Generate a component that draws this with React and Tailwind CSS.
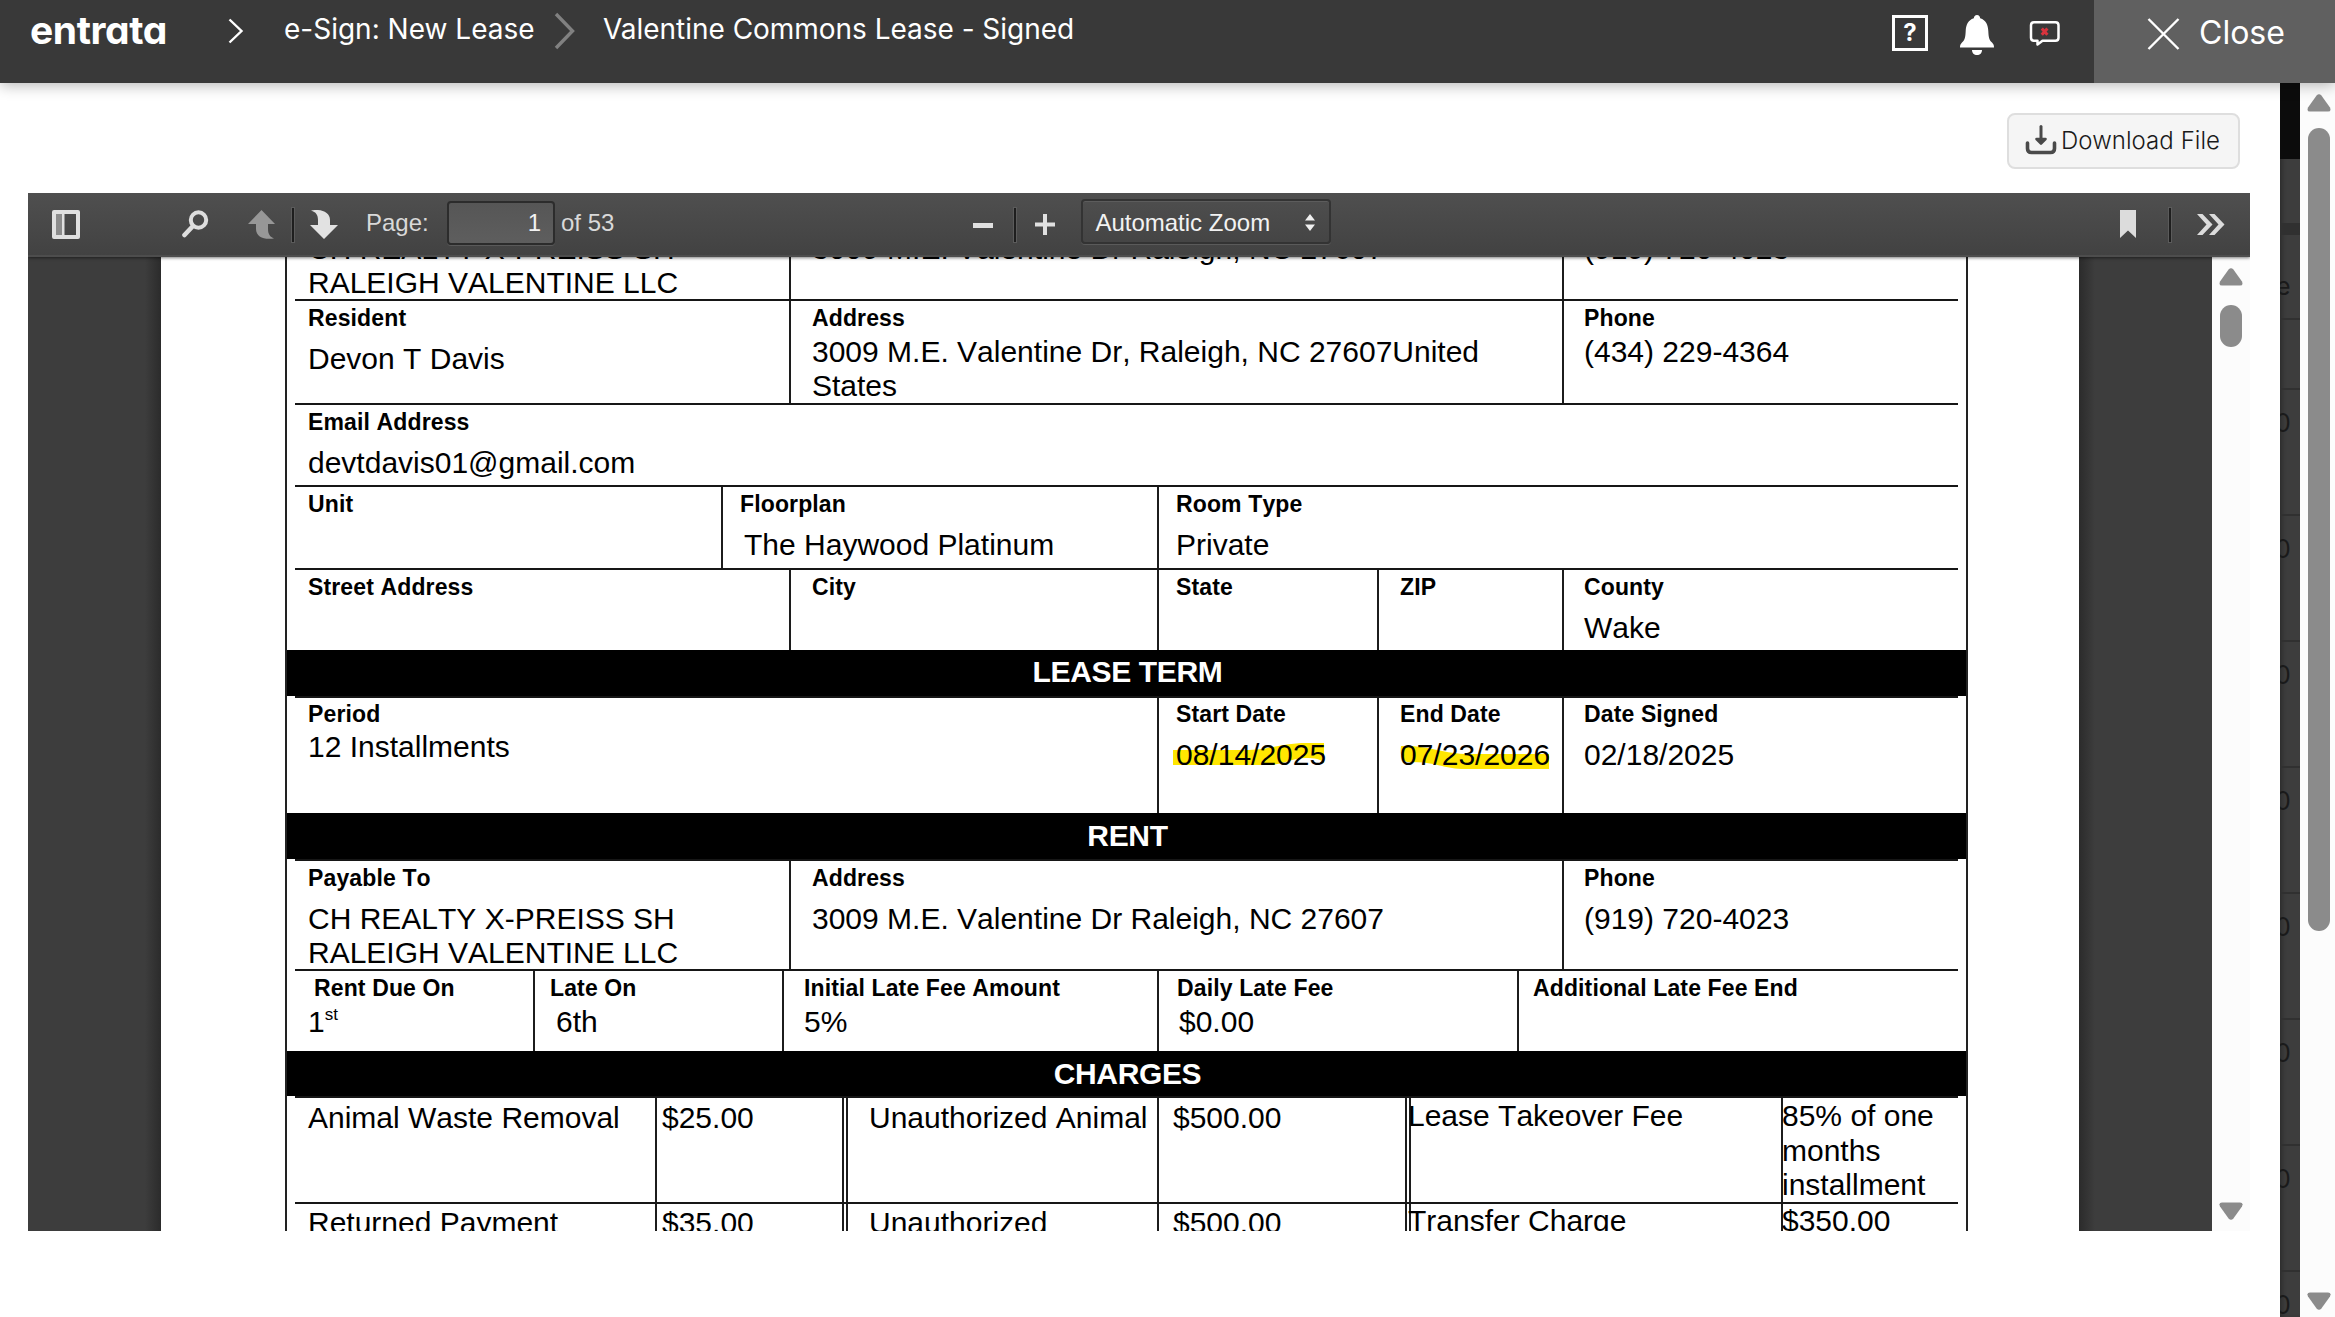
import React from "react";

/* ---------- document primitives ---------- */

function Row({ h, line = true, children }) {
  return (
    <div className={`mx-[8px] flex overflow-hidden ${line ? "border-t-2 border-[#161616]" : ""} ${h}`}>
      {children}
    </div>
  );
}

function Cell({ first, className = "", children }) {
  return (
    <div className={`relative shrink-0 whitespace-nowrap ${first ? "" : "border-l-2 border-[#1c1c1c]"} ${className}`}>
      {children}
    </div>
  );
}

function Label({ className = "mt-[2px]", children }) {
  return <div className={`text-[23px] font-bold leading-[30px] tracking-[0.13px] ${className}`}>{children}</div>;
}

function Value({ className = "mt-[9px]", children }) {
  return <div className={`text-[30px] ${className}`}>{children}</div>;
}

function Banner({ h, className = "", children }) {
  return (
    <div className={`bg-black pl-[2px] text-center text-[30px] font-bold leading-[34px] tracking-[-0.35px] text-white ${h} ${className}`}>
      {children}
    </div>
  );
}

function LeaseTable() {
  return (
    <div className="ml-[124px] h-[974px] w-[1683px] overflow-hidden border-x-2 border-[#222] leading-[34px] text-black [font-kerning:none]">
      <Row h="h-[42px]" line={false}>
        <Cell first className="w-[494px] pl-[13px]">
          <Value className="mt-[-25px]">CH REALTY X-PREISS SH</Value>
          <Value className="mt-0">RALEIGH VALENTINE LLC</Value>
        </Cell>
        <Cell className="w-[773px] pl-[21px]">
          <Value className="mt-[-25px]">3009 M.E. Valentine Dr Raleigh, NC 27607</Value>
        </Cell>
        <Cell className="grow pl-[20px]">
          <Value className="mt-[-25px]">(919) 720-4023</Value>
        </Cell>
      </Row>

      <Row h="h-[104px]">
        <Cell first className="w-[494px] pl-[13px]">
          <Label>Resident</Label>
          <Value>Devon T Davis</Value>
        </Cell>
        <Cell className="w-[773px] pl-[21px]">
          <Label>Address</Label>
          <Value className="mt-[2px]">
            3009 M.E. Valentine Dr, Raleigh, NC 27607United
            <br />
            States
          </Value>
        </Cell>
        <Cell className="grow pl-[20px]">
          <Label>Phone</Label>
          <Value className="mt-[2px]">(434) 229-4364</Value>
        </Cell>
      </Row>

      <Row h="h-[82px]">
        <Cell first className="grow pl-[13px]">
          <Label>Email Address</Label>
          <Value>devtdavis01@gmail.com</Value>
        </Cell>
      </Row>

      <Row h="h-[83px]">
        <Cell first className="w-[426px] pl-[13px]">
          <Label>Unit</Label>
        </Cell>
        <Cell className="w-[436px] pl-[17px]">
          <Label>Floorplan</Label>
          <Value className="mt-[9px] pl-1">The Haywood Platinum</Value>
        </Cell>
        <Cell className="grow pl-[17px]">
          <Label>Room Type</Label>
          <Value>Private</Value>
        </Cell>
      </Row>

      <Row h="h-[82px]">
        <Cell first className="w-[494px] pl-[13px]">
          <Label>Street Address</Label>
        </Cell>
        <Cell className="w-[368px] pl-[21px]">
          <Label>City</Label>
        </Cell>
        <Cell className="w-[220px] pl-[17px]">
          <Label>State</Label>
        </Cell>
        <Cell className="w-[185px] pl-[21px]">
          <Label>ZIP</Label>
        </Cell>
        <Cell className="grow pl-[20px]">
          <Label>County</Label>
          <Value>Wake</Value>
        </Cell>
      </Row>

      <Banner h="h-[46px]" className="pt-[5px]">LEASE TERM</Banner>

      <Row h="h-[117px]">
        <Cell first className="w-[862px] pl-[13px]">
          <Label className="mt-px">Period</Label>
          <Value className="mt-px">12 Installments</Value>
        </Cell>
        <Cell className="w-[220px] pl-[17px]">
          <svg className="absolute left-[14px] top-[44px]" width="152" height="26" viewBox="0 0 152 26" fill="#ffe600">
            <path d="M0 8H72C98 8 108 1 134 1H151V21C148 17 142 16 132 16C118 16 112 23 92 23H0Z" />
          </svg>
          <Label className="mt-px">Start Date</Label>
          <Value className="relative mt-[9px]">08/14/2025</Value>
        </Cell>
        <Cell className="w-[185px] pl-[21px]">
          <svg className="absolute left-[20px] top-[44px]" width="152" height="28" viewBox="0 0 152 28" fill="#ffe600">
            <path d="M2 4C30 3 44 12 70 12H150V27H66C44 27 36 19 8 20C2 18 1 12 2 4Z" />
          </svg>
          <Label className="mt-px">End Date</Label>
          <Value className="relative mt-[9px]">07/23/2026</Value>
        </Cell>
        <Cell className="grow pl-[20px]">
          <Label className="mt-px">Date Signed</Label>
          <Value>02/18/2025</Value>
        </Cell>
      </Row>

      <Banner h="h-[46px]" className="pt-[6px]">RENT</Banner>

      <Row h="h-[110px]">
        <Cell first className="w-[494px] pl-[13px]">
          <Label>Payable To</Label>
          <Value>
            CH REALTY X-PREISS SH
            <br />
            RALEIGH VALENTINE LLC
          </Value>
        </Cell>
        <Cell className="w-[773px] pl-[21px]">
          <Label>Address</Label>
          <Value>3009 M.E. Valentine Dr Raleigh, NC 27607</Value>
        </Cell>
        <Cell className="grow pl-[20px]">
          <Label>Phone</Label>
          <Value>(919) 720-4023</Value>
        </Cell>
      </Row>

      <Row h="h-[82px]">
        <Cell first className="w-[238px] pl-[13px]">
          <Label className="mt-[2px] pl-[6px]">Rent Due On</Label>
          <Value className="mt-[2px]">
            1<span className="relative top-[-12px] text-[17px] leading-none">st</span>
          </Value>
        </Cell>
        <Cell className="w-[249px] pl-[15px]">
          <Label>Late On</Label>
          <Value className="mt-[2px] pl-[6px]">6th</Value>
        </Cell>
        <Cell className="w-[375px] pl-[20px]">
          <Label>Initial Late Fee Amount</Label>
          <Value className="mt-[2px]">5%</Value>
        </Cell>
        <Cell className="w-[360px] pl-[18px]">
          <Label>Daily Late Fee</Label>
          <Value className="mt-[2px] pl-[2px]">$0.00</Value>
        </Cell>
        <Cell className="grow pl-[14px]">
          <Label>Additional Late Fee End</Label>
        </Cell>
      </Row>

      <Banner h="h-[45px]" className="pt-[6px]">CHARGES</Banner>

      <Row h="h-[106px]">
        <Cell first className="w-[360px] pl-[13px]">
          <Value className="mt-[3px]">Animal Waste Removal</Value>
        </Cell>
        <Cell className="w-[187px] pl-[5px]">
          <Value className="mt-[3px]">$25.00</Value>
        </Cell>
        <Cell className="w-1" />
        <Cell className="w-[311px] pl-[21px]">
          <Value className="mt-[3px]">Unauthorized Animal</Value>
        </Cell>
        <Cell className="w-[248px] pl-[14px]">
          <Value className="mt-[3px]">$500.00</Value>
        </Cell>
        <Cell className="w-1" />
        <Cell className="w-[372px]">
          <Value className="ml-[-3px] mt-px">Lease Takeover Fee</Value>
        </Cell>
        <Cell className="grow">
          <Value className="ml-[-1px] mt-px leading-[34.5px]">
            85% of one
            <br />
            months
            <br />
            installment
          </Value>
        </Cell>
      </Row>

      <Row h="h-[29px]">
        <Cell first className="w-[360px] pl-[13px]">
          <Value className="mt-[2px]">Returned Payment</Value>
        </Cell>
        <Cell className="w-[187px] pl-[5px]">
          <Value className="mt-[2px]">$35.00</Value>
        </Cell>
        <Cell className="w-1" />
        <Cell className="w-[311px] pl-[21px]">
          <Value className="mt-[2px]">Unauthorized</Value>
        </Cell>
        <Cell className="w-[248px] pl-[14px]">
          <Value className="mt-[2px]">$500.00</Value>
        </Cell>
        <Cell className="w-1" />
        <Cell className="w-[372px]">
          <Value className="ml-[-3px] mt-0">Transfer Charge</Value>
        </Cell>
        <Cell className="grow">
          <Value className="ml-[-1px] mt-0">$350.00</Value>
        </Cell>
      </Row>
    </div>
  );
}

/* ---------- chrome ---------- */

function ScrollArrow({ down }) {
  return (
    <svg width="24" height="18" viewBox="0 0 24 18" className={down ? "rotate-180" : ""} fill="#8b8b8b">
      <path d="M9.6 1.6Q12-1.2 14.4 1.6L23 13.6Q24.6 17.6 21 17.6H3Q-.6 17.6 1 13.6Z" />
    </svg>
  );
}

function Separator({ className }) {
  return <div className={`h-9 w-[4px] border border-[#5b5b5b] bg-[#1e1e1e] ${className}`} />;
}

function Header() {
  return (
    <header className="relative z-10 flex h-[83px] w-full bg-[#393939] font-[Inter,sans-serif] text-white shadow-[0_2px_14px_rgba(0,0,0,0.3)]">
      <div className="ml-[30px] w-[140px] pt-[6px] text-[39px] font-bold leading-[48px] tracking-[-0.4px] [font-feature-settings:'cv11'_1]">
        entrata
      </div>
      <svg className="ml-[57px] mt-[18px]" width="18" height="26" viewBox="0 0 18 26" fill="none" stroke="#fff" strokeWidth="2.4">
        <path d="M2.5 1.5L14.5 13L2.5 24.5" />
      </svg>
      <div className="ml-[39px] w-[250px] whitespace-nowrap pt-[11px] text-[28px] leading-9">e-Sign: New Lease</div>
      <svg className="ml-[19px] mt-[12px]" width="24" height="38" viewBox="0 0 24 38" fill="none" stroke="#818181" strokeWidth="3.4">
        <path d="M3 2L19.5 19L3 36" />
      </svg>
      <div className="ml-[26px] w-[480px] whitespace-nowrap pt-[11px] text-[28px] leading-9 tracking-[-0.03px]">
        Valentine Commons Lease - Signed
      </div>
      <div className="ml-auto flex">
        <div className="mt-[15px] flex h-9 w-9 items-center justify-center border-[3px] border-white text-[24px] font-bold leading-none">
          ?
        </div>
        <svg className="ml-8 mt-[15px]" width="34" height="40" viewBox="0 0 34 40" fill="#fff">
          <path d="M17 0C19 0 20 1.4 20.2 3.2C26 5 28 10 28.3 16C28.6 22 29 25 32 27.5C33.6 29 34 30.500 34 32.500H0C0 30.500.4 29 2 27.500C5 25 5.400 22 5.700 16C6 10 8 5 13.800 3.200C14 1.400 15 0 17 0Z" />
          <path d="M12 35H22C22 38 20 40 17 40S12 38 12 35Z" />
        </svg>
        <svg className="ml-[35px] mt-[20px]" width="32" height="28" viewBox="0 0 32 28" fill="none">
          <path d="M5 2.300H26.500Q29.500 2.300 29.500 5.300V17.700Q29.500 20.700 26.500 20.700H13.500L8.500 24.500V20.700H5Q2 20.700 2 17.700V5.300Q2 2.300 5 2.300Z" stroke="#fff" strokeWidth="2.500" strokeLinejoin="round" />
          <path d="M12.800 8.500L18.400 14.800M18.400 8.500L12.800 14.800" stroke="#d8333d" strokeWidth="3" />
        </svg>
        <div className="ml-[33px] flex h-[83px] w-[241px] bg-[#606060]">
          <svg className="ml-[53px] mt-[18px]" width="33" height="32" viewBox="0 0 33 32" fill="none" stroke="#fff" strokeWidth="2.400">
            <path d="M1.500 1L31.500 31M31.500 1L1.500 31" />
          </svg>
          <div className="ml-[19px] pt-[12px] text-[32px] leading-[42px]">Close</div>
        </div>
      </div>
    </header>
  );
}

function Toolbar() {
  return (
    <div className="relative z-10 flex h-16 w-full items-start border-b-2 border-[#4d4d4d] bg-linear-to-b from-[#4f4f4f] to-[#424242] text-[24px] leading-[30px] text-[#d9d9d9] shadow-[0_1px_3px_rgba(0,0,0,0.5)]">
      <svg className="ml-[24px] mt-[17px]" width="28" height="29" viewBox="0 0 28 29">
        <path fillRule="evenodd" fill="#e0e0e0" d="M2 0H26Q28 0 28 2V27Q28 29 26 29H2Q0 29 0 27V2Q0 0 2 0ZM4 4V25H24V4Z" />
        <rect x="4" y="4" width="6" height="21" fill="#8c8c8c" />
        <rect x="10" y="4" width="2.500" height="21" fill="#e0e0e0" />
      </svg>
      <svg className="ml-[102px] mt-[17px]" width="27" height="28" viewBox="0 0 27 28" fill="none" stroke="#dedede">
        <circle cx="16.500" cy="10" r="7.700" strokeWidth="4" />
        <path d="M10.500 16.500L2.500 25" strokeWidth="4.600" strokeLinecap="round" />
      </svg>
      <svg className="ml-[39px] mt-[17px]" width="28" height="29" viewBox="0 0 28 29" fill="#979797">
        <path d="M13.500 0L27 14H20V19C20 24 22 27 26 28.500C16 30 8 27 8 19V14H0Z" />
      </svg>
      <Separator className="ml-[15px] mt-[14px]" />
      <svg className="ml-[15px] mt-[17px]" width="28" height="29" viewBox="0 0 28 29" fill="#e2e2e2">
        <path d="M1 .5C11-1.500 20 2 20 10V15H28L14 29L0 15H8V10C8 5 6 2 1 .5Z" />
      </svg>
      <div className="ml-[28px] mt-[15px] w-[81px]">Page:</div>
      <div className="mt-2 h-11 w-[108px] rounded-[4px] border-2 border-[#2c2c2c] bg-linear-to-b from-[#565656] to-[#5e5e5e] pr-[12px] pt-[5px] text-right text-[#f2f2f2] shadow-[0_1px_0_#5a5a5a]">
        1
      </div>
      <div className="ml-[6px] mt-[15px]">of 53</div>
      <div className="ml-[359px] mt-[30px] h-[5px] w-5 bg-[#e0e0e0]" />
      <Separator className="ml-[20px] mt-[14px]" />
      <svg className="ml-[18px] mt-[21px]" width="20" height="21" viewBox="0 0 20 21" fill="#e0e0e0">
        <path d="M8 0H12V8.500H20V12.500H12V21H8V12.500H0V8.500H8Z" />
      </svg>
      <div className="ml-[26px] mt-[6px] flex h-[45px] w-[250px] rounded-[4px] border-2 border-[#333] pl-[12px] pt-[7px] text-[#f2f2f2] shadow-[0_1px_0_#5a5a5a,inset_0_1px_0_#5c5c5c]">
        <span className="w-[210px] whitespace-nowrap">Automatic Zoom</span>
        <svg className="mt-[6px]" width="10" height="17" viewBox="0 0 10 17" fill="#f0f0f0">
          <path d="M5 0L10 6.500H0ZM5 17L10 10.500H0Z" />
        </svg>
      </div>
      <div className="ml-auto flex">
        <svg className="mt-[17px]" width="16" height="28" viewBox="0 0 16 28" fill="#dcdcdc">
          <path d="M0 0H16V28L8 20.500L0 28Z" />
        </svg>
        <Separator className="ml-[32px] mt-[14px]" />
        <svg className="ml-[25px] mr-[25px] mt-[21px]" width="28" height="21" viewBox="0 0 28 21" fill="#dcdcdc">
          <path d="M0 0H5.500L15.500 10.500L5.500 21H0L9.500 10.500ZM12 0H17.500L27.500 10.500L17.500 21H12L21.500 10.500Z" />
        </svg>
      </div>
    </div>
  );
}

function Viewer() {
  return (
    <div className="ml-[28px] h-[1038px] w-[2222px] overflow-hidden font-['Liberation_Sans',Arial,sans-serif]">
      <Toolbar />
      <div className="flex h-[974px] w-full bg-[#3d3d3d]">
        <div className="h-full w-[133px] bg-linear-to-r from-[#3d3d3d] from-88% to-[#2b2b2b]" />
        <div className="h-full w-[1918px] bg-white">
          <LeaseTable />
        </div>
        <div className="h-full w-[133px] bg-linear-to-l from-[#3d3d3d] from-88% to-[#2b2b2b]" />
        <div className="flex w-[38px] flex-col items-center bg-[#fcfcfc] pt-[11px]">
          <ScrollArrow />
          <div className="mt-[19px] h-[42px] w-[22px] rounded-full bg-[#8b8b8b]" />
          <div className="mb-[11px] mt-auto">
            <ScrollArrow down />
          </div>
        </div>
      </div>
    </div>
  );
}

function BackdropStrip() {
  return (
    <div className="w-5 overflow-hidden bg-[#3d3d3d] font-[Inter,sans-serif] text-[25px] leading-[30px] text-[#1a1a1a] shadow-[inset_4px_0_5px_-2px_rgba(0,0,0,0.3)]">
      <div className="h-[76px] bg-[#0c0c0c]" />
      <div className="h-[64px]" />
      <div className="h-[12px] bg-[#303030]" />
      <div className="h-[85px] border-b-2 border-[#303030] pt-[36px]">
        <span className="ml-[-4px]">e</span>
      </div>
      <div className="h-[70px] border-b-2 border-[#303030]" />
      {[0, 1, 2, 3, 4, 5, 6, 7].map((n) => (
        <div key={n} className="h-[126px] border-b-2 border-[#303030] pt-[18px]">
          <span className="ml-[-5px]">0</span>
        </div>
      ))}
    </div>
  );
}

export default function App() {
  return (
    <div className="h-[1317px] w-[2335px] overflow-hidden bg-white">
      <Header />
      <div className="flex h-[1234px]">
        <main className="w-[2280px] bg-white">
          <div className="flex h-[110px] justify-end pr-[40px] pt-[30px]">
            <button className="flex h-[56px] w-[233px] rounded-[8px] border-2 border-[#dedede] bg-[#f5f5f5] font-[Inter,sans-serif] text-[24px] font-light leading-[30px] tracking-[0.05px] text-[#1a1a1a]">
              <svg className="ml-[16px] mt-[10px]" width="32" height="30" viewBox="0 0 32 30" fill="none" stroke="#4a4a4a" strokeLinecap="round" strokeLinejoin="round">
                <path d="M2.500 18V23.500Q2.500 27.500 6.500 27.500H25.500Q29.500 27.500 29.500 23.500V18" strokeWidth="3.600" />
                <path d="M16 1.500V16" strokeWidth="3" />
                <path d="M11.500 14L16 18.500L20.500 14Z" strokeWidth="2.600" fill="#4a4a4a" />
              </svg>
              <span className="ml-[4px] mt-[11px] whitespace-nowrap">Download File</span>
            </button>
          </div>
          <Viewer />
        </main>
        <BackdropStrip />
        <div className="flex w-[35px] flex-col items-center bg-[#fcfcfc] pl-[3px] pt-[11px]">
          <ScrollArrow />
          <div className="mt-4 h-[803px] w-[22px] rounded-full bg-[#8b8b8b]" />
          <div className="mb-[7px] mt-auto">
            <ScrollArrow down />
          </div>
        </div>
      </div>
    </div>
  );
}
